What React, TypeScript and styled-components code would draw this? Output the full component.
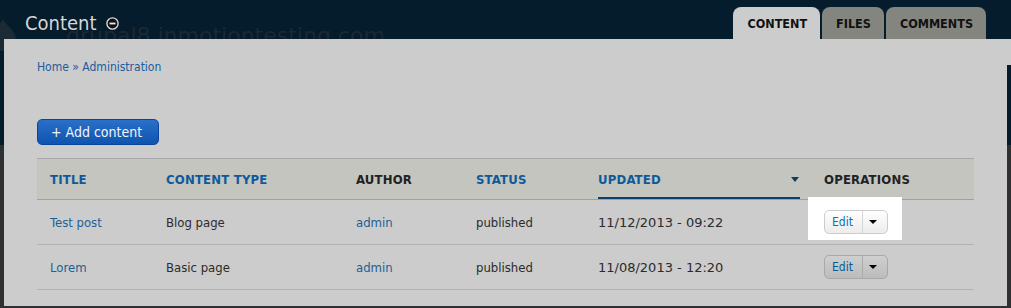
import React from "react";
import styled, { createGlobalStyle } from "styled-components";

const GlobalStyle = createGlobalStyle`
  html, body { margin: 0; padding: 0; }
  body {
    font-family: "DejaVu Sans Condensed", "DejaVu Sans", sans-serif;
    font-stretch: condensed;
    background: #041c2b;
  }
  * { box-sizing: border-box; }
`;

const Page = styled.div`
  position: relative;
  width: 1011px;
  height: 308px;
  overflow: hidden;
  background: linear-gradient(to bottom, #041c2b 0, #041c2b 145px, #2f3032 145px);
`;

const BackgroundSite = styled.div`
  display: flex;
  align-items: flex-start;
  gap: 48px;
  padding: 18px 0 0 0;
  margin-left: -12px;
`;

const SiteName = styled.div`
  font-family: "DejaVu Sans", sans-serif;
  font-stretch: normal;
  font-size: 22px;
  line-height: 26px;
  padding-top: 5px;
  color: #1d2832;
  white-space: nowrap;
`;

const Overlay = styled.div`
  position: absolute;
  inset: 0;
  display: flex;
  flex-direction: column;
`;

const TitleBar = styled.div`
  height: 39px;
  display: flex;
  justify-content: space-between;
  padding: 0 25px 0 25px;
`;

const TitleWrap = styled.div`
  display: flex;
  align-items: center;
  gap: 9px;
  padding-top: 11px;
  align-self: flex-start;
`;

const Title = styled.h1`
  margin: 0;
  font-size: 20px;
  line-height: 24px;
  font-weight: normal;
  color: #d6d6d6;
`;

const Tabs = styled.div`
  display: flex;
  gap: 2px;
  align-self: flex-end;
`;

const Tab = styled.div<{ $active?: boolean }>`
  height: 32px;
  padding: 0 13px 0 14px;
  display: flex;
  align-items: center;
  border-radius: 8px 8px 0 0;
  background: ${(p) => (p.$active ? "#cccccc" : "#858580")};
  color: #111;
  font-weight: bold;
  font-size: 12.5px;
  text-transform: uppercase;
`;

const Panel = styled.div`
  position: relative;
  flex: 1;
  margin: 0 4px 2px 4px;
  background: #cccccc;
  padding: 19px 33px 0 33px;
  &::after {
    content: "";
    position: absolute;
    right: -4px;
    top: 0;
    width: 4px;
    height: 26px;
    background: #cccccc;
  }
`;

const Breadcrumb = styled.div`
  font-size: 12px;
  line-height: 18px;
  color: #1a5d9e;
`;

const AddButton = styled.button`
  margin-top: 43px;
  display: inline-flex;
  align-items: center;
  height: 26px;
  width: 122px;
  padding: 0 0 0 13px;
  border: 1px solid #0b45a0;
  border-radius: 5px;
  background: linear-gradient(to bottom, #2a6fc8, #0f55b0);
  color: #f4f4f4;
  font-family: inherit;
  font-stretch: condensed;
  font-size: 14px;
  cursor: pointer;
`;

const Table = styled.div`
  margin-top: 13px;
  border-top: 1px solid #a8a8a8;
`;

const COLS = "116px 190px 120px 122px 226px 163px";

const HeaderRow = styled.div`
  display: grid;
  grid-template-columns: ${COLS};
  height: 41px;
  background: #c5c5c0;
  border-bottom: 1px solid #a0a0a0;
`;

const HeadCell = styled.div<{ $link?: boolean }>`
  display: flex;
  align-items: center;
  padding-left: 13px;
  font-size: 13px;
  font-weight: bold;
  letter-spacing: 0.2px;
  text-transform: uppercase;
  color: ${(p) => (p.$link ? "#0c5a9a" : "#222")};
`;

const SortCell = styled.div`
  padding: 0 11px 0 13px;
  display: flex;
`;

const SortLink = styled.div`
  flex: 1;
  display: flex;
  align-items: center;
  justify-content: space-between;
  padding-top: 2px;
  border-bottom: 2px solid #0d3f6b;
  font-size: 13px;
  font-weight: bold;
  letter-spacing: 0.2px;
  text-transform: uppercase;
  color: #0c5a9a;
`;

const SortArrow = styled.span`
  width: 0;
  height: 0;
  margin-right: 1px;
  border-left: 4px solid transparent;
  border-right: 4px solid transparent;
  border-top: 5px solid #0d3d66;
`;

const Row = styled.div`
  display: grid;
  grid-template-columns: ${COLS};
  height: 45px;
  border-bottom: 1px solid #b3b3b3;
`;

const Cell = styled.div<{ $link?: boolean; $wide?: boolean }>`
  display: flex;
  align-items: center;
  padding-left: 13px;
  font-size: 13px;
  font-stretch: ${(p) => (p.$wide ? "normal" : "condensed")};
  font-family: ${(p) => (p.$wide ? '"DejaVu Sans", sans-serif' : "inherit")};
  white-space: pre;
  color: ${(p) => (p.$link ? "#1d5f96" : "#2b2b2b")};
`;

const OpsCell = styled.div`
  position: relative;
  display: flex;
  align-items: center;
  padding-left: 13px;
`;

const Highlight = styled.div`
  position: absolute;
  left: -3px;
  top: -3px;
  width: 94px;
  height: 43px;
  background: #ffffff;
`;

const DropButton = styled.div<{ $bright?: boolean }>`
  position: relative;
  display: inline-flex;
  height: 24px;
  border: 1px solid ${(p) => (p.$bright ? "#cdcdcd" : "#a8a8a8")};
  border-radius: 5px;
  background: ${(p) =>
    p.$bright
      ? "linear-gradient(to bottom, #ffffff, #ececec)"
      : "linear-gradient(to bottom, #cfcfcf, #bcbcbc)"};
`;

const DropMain = styled.span<{ $bright?: boolean }>`
  display: flex;
  align-items: center;
  padding: 0 9px 0 7px;
  font-size: 12px;
  color: ${(p) => (p.$bright ? "#0074bd" : "#005d97")};
`;

const DropToggle = styled.span<{ $bright?: boolean }>`
  display: flex;
  align-items: center;
  padding: 0 10px 0 6px;
  border-left: 1px solid ${(p) => (p.$bright ? "#d6d6d6" : "#ababab")};
`;

const Caret = styled.span`
  width: 0;
  height: 0;
  border-left: 4px solid transparent;
  border-right: 4px solid transparent;
  border-top: 4px solid #000;
`;

const MinusCircle = () => (
  <svg width="13" height="13" viewBox="0 0 13 13">
    <circle cx="6.5" cy="6.5" r="5.6" fill="#111" stroke="#d8d8d8" strokeWidth="1.4" />
    <rect x="3.5" y="5.6" width="6" height="1.8" fill="#e8e8e8" />
  </svg>
);

const DropLogo = () => (
  <svg width="30" height="34" viewBox="0 0 30 34">
    <path d="M15 1 C18 8 28 12 28 22 C28 29 22 33 15 33 C8 33 2 29 2 22 C2 12 12 8 15 1 Z" fill="#1c2a35" />
  </svg>
);

type Item = {
  title: string;
  type: string;
  author: string;
  status: string;
  updated: string;
  bright?: boolean;
};

const rows: Item[] = [
  { title: "Test post", type: "Blog page", author: "admin", status: "published", updated: "11/12/2013 - 09:22", bright: true },
  { title: "Lorem", type: "Basic page", author: "admin", status: "published", updated: "11/08/2013 - 12:20" },
];

export default function App() {
  return (
    <>
      <GlobalStyle />
      <Page>
        <BackgroundSite>
          <DropLogo />
          <SiteName>drupal8.inmotiontesting.com</SiteName>
        </BackgroundSite>
        <Overlay>
          <TitleBar>
            <TitleWrap>
              <Title>Content</Title>
              <MinusCircle />
            </TitleWrap>
            <Tabs>
              <Tab $active>Content</Tab>
              <Tab>Files</Tab>
              <Tab>Comments</Tab>
            </Tabs>
          </TitleBar>
          <Panel>
            <Breadcrumb>Home » Administration</Breadcrumb>
            <AddButton>+ Add content</AddButton>
            <Table>
              <HeaderRow>
                <HeadCell $link>Title</HeadCell>
                <HeadCell $link>Content type</HeadCell>
                <HeadCell>Author</HeadCell>
                <HeadCell $link>Status</HeadCell>
                <SortCell>
                  <SortLink>
                    Updated
                    <SortArrow />
                  </SortLink>
                </SortCell>
                <HeadCell>Operations</HeadCell>
              </HeaderRow>
              {rows.map((r) => (
                <Row key={r.title}>
                  <Cell $link>{r.title}</Cell>
                  <Cell>{r.type}</Cell>
                  <Cell $link>{r.author}</Cell>
                  <Cell>{r.status}</Cell>
                  <Cell $wide>{r.updated}</Cell>
                  <OpsCell>
                    {r.bright && <Highlight />}
                    <DropButton $bright={r.bright}>
                      <DropMain $bright={r.bright}>Edit</DropMain>
                      <DropToggle $bright={r.bright}>
                        <Caret />
                      </DropToggle>
                    </DropButton>
                  </OpsCell>
                </Row>
              ))}
            </Table>
          </Panel>
        </Overlay>
      </Page>
    </>
  );
}
